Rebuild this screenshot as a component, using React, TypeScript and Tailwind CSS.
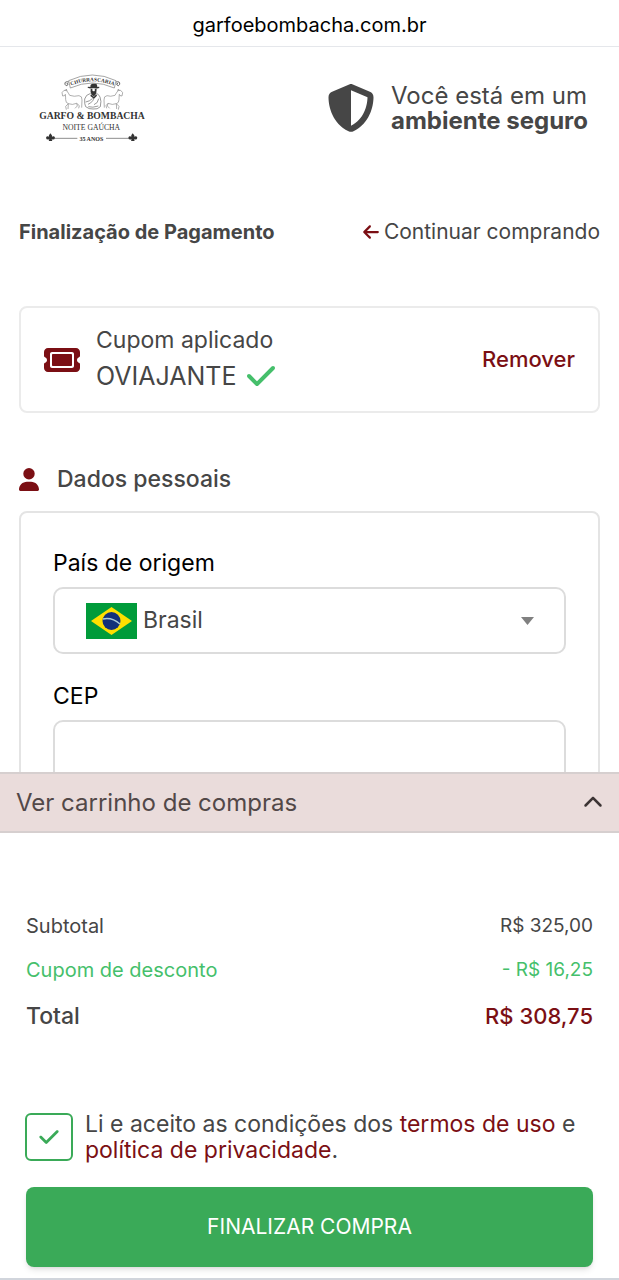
import { useState } from "react";
import {
  FaArrowLeft,
  FaCheck,
  FaChevronUp,
  FaShieldHalved,
  FaTicket,
  FaUser,
} from "react-icons/fa6";

const Logo = () => {
  return (
    <svg
      viewBox="54 36 324 213"
      className="w-[108px] h-[71px] shrink-0"
      role="img"
      aria-label="Churrascaria Garfo & Bombacha"
      fill="#333"
      fontFamily="'Liberation Serif', serif"
    >
      {/* arched banner */}
      <path id="arch" d="M148 79 Q217 49 287 79" fill="none" />
      <path
        d="M146 62 Q217 28 288 62 L283 84 Q217 54 151 84 Z"
        fill="none"
        stroke="#777"
        strokeWidth="2"
      />
      <text fontSize="16" fontWeight="bold" textAnchor="middle">
        <textPath href="#arch" startOffset="50%">
          CHURRASCARIA
        </textPath>
      </text>
      <g fill="none" stroke="#666" strokeWidth="3">
        <path d="M146 66 q-13 -3 -11 7 q3 8 9 1 q1 -5 -4 -3" />
        <path d="M288 66 q13 -3 11 7 q-3 8 -9 1 q-1 -5 4 -3" />
      </g>
      {/* horses */}
      <g fill="none" stroke="#888" strokeWidth="2">
        <path d="M128 108 l-2 -10 l6 -7 l8 1 q6 8 9 14 q14 5 28 1 q10 1 9 13 l-1 23 M128 108 q8 0 8 -5 q1 9 1 16 q0 10 8 12 l-8 8 l2 10 M145 131 l-1 16 M145 131 q12 5 25 -1 l8 7 l-2 8 M170 130 l2 8 l-7 7 M136 91 l3 -4 l2 6" />
        <path d="M306 108 l2 -10 l-6 -7 l-8 1 q-6 8 -9 14 q-14 5 -24 1 q-10 1 -9 13 l1 23 M306 108 q-8 0 -8 -5 q-1 9 -1 16 q0 10 -8 12 l8 8 l-2 10 M289 131 l1 16 M289 131 q-12 5 -25 -1 l-6 7 l2 8 M264 130 l-2 8 l7 7 M298 91 l-3 -4 l-2 6" />
      </g>
      {/* gaucho */}
      <path d="M202 81 q2 5 11 4 l13 0 q10 2 13 -4 q-3 -1 -7 0 q0 -11 -7 -10 l-9 0 q-6 2 -5 10 q-5 -2 -9 0 Z" />
      <path d="M212 86 q-2 12 3 18 q6 8 11 1 q4 -6 4 -19 l-6 0 q2 8 -3 8 q-5 0 -4 -8 Z" />
      <path
        d="M212 100 q-15 4 -18 17 q-1 16 3 23 q10 8 22 7 q14 2 22 -7 q4 -17 -1 -29 q-4 -9 -11 -11 M197 126 q12 -2 20 -10 M220 108 l0 12 q-8 11 -16 13 M236 116 q-2 14 -14 18 M205 140 q12 4 30 -2"
        fill="none"
        stroke="#666"
        strokeWidth="2"
      />
      <path d="M213 103 l8 8 l8 -8 l2 4 l-9 9 l-11 -8 Z" />
      <text
        x="216"
        y="177"
        fontSize="29"
        fontWeight="bold"
        textAnchor="middle"
      >
        GARFO &amp; BOMBACHA
      </text>
      <text x="214" y="210" fontSize="23" textAnchor="middle">
        NOITE GAÚCHA
      </text>
      <text
        x="214"
        y="243"
        fontSize="18"
        fontWeight="bold"
        textAnchor="middle"
      >
        35 ANOS
      </text>
      {/* ornaments */}
      <path d="M103 235 H172 M258 235 H327" stroke="#555" strokeWidth="2" />
      <path d="M91 220 q9 9 3 12 q8 -7 11 1 q-1 8 -10 5 l2 5 h-11 l2 -5 q-9 3 -10 -5 q3 -8 11 -1 q-6 -3 2 -12 Z" />
      <path d="M338 220 q9 9 3 12 q8 -7 11 1 q-1 8 -10 5 l2 5 h-11 l2 -5 q-9 3 -10 -5 q3 -8 11 -1 q-6 -3 2 -12 Z" />
    </svg>
  );
};

const BrazilFlag = () => {
  return (
    <svg viewBox="0 0 51 36" className="w-[51px] h-9" aria-hidden="true">
      <rect width="51" height="36" fill="#009b3a" />
      <path d="M25.500 4 L46 18 L25.500 32 L5 18 Z" fill="#fedf00" />
      <circle cx="25.500" cy="18" r="9" fill="#12307a" />
      <path
        d="M17 16 Q26 14 34 21"
        fill="none"
        stroke="#a9c9d8"
        strokeWidth="1.500"
      />
    </svg>
  );
};

const App = () => {
  const [accepted, setAccepted] = useState(true);

  return (
    <div className="h-screen flex flex-col bg-white text-[#464646] font-['Inter',sans-serif]">
      {/* address */}
      <div className="h-[47px] shrink-0 flex items-center justify-center pt-1 border-b border-gray-200 text-black text-[20px]">
        garfoebombacha.com.br
      </div>

      {/* page */}
      <main className="flex-1 min-h-0 overflow-hidden px-[19px]">
        <header className="flex items-center justify-between pt-[25px] pl-[19px] pr-3">
          <Logo />
          <div className="flex items-center gap-4">
            <FaShieldHalved className="size-12" />
            <p className="text-[24px] leading-[25px]">
              Você está em um
              <br />
              <strong>ambiente seguro</strong>
            </p>
          </div>
        </header>

        <div className="flex items-center justify-between mt-[75px] leading-7">
          <h1 className="text-[20px] font-bold">Finalização de Pagamento</h1>
          <a href="#" className="flex items-center gap-1 text-[21px]">
            <FaArrowLeft className="size-[18px] text-[#7b0f14]" />
            Continuar comprando
          </a>
        </div>

        {/* coupon */}
        <section className="mt-[60px] flex items-center h-[107px] px-[23px] border-2 border-[#ebebeb] rounded-lg">
          <FaTicket className="size-9 text-[#7b0f14]" />
          <div className="ml-4 flex-1">
            <p className="text-[23px] leading-8">Cupom aplicado</p>
            <p className="flex items-center gap-2 text-[25px] leading-10">
              OVIAJANTE
              <FaCheck className="size-8 text-[#45bf6b]" />
            </p>
          </div>
          <button className="text-[22px] font-medium text-[#7b0f14]">
            Remover
          </button>
        </section>

        {/* personal data */}
        <h2 className="mt-[50px] flex items-center gap-[18px] text-[23px] leading-8 font-medium">
          <FaUser className="w-5 h-[23px] text-[#7b0f14]" />
          Dados pessoais
        </h2>
        <section className="mt-4 px-8 pt-8 pb-8 border-2 border-[#e4e4e4] rounded-lg text-[23px]">
          <label htmlFor="country" className="block leading-9 text-black">
            País de origem
          </label>
          <div className="relative mt-1.5">
            <select
              id="country"
              className="block w-full h-[67px] pl-[88px] pr-12 border-2 border-[#dcdcdc] rounded-[10px] appearance-none bg-white"
            >
              <option>Brasil</option>
            </select>
            <div className="absolute left-[33px] inset-y-0 flex items-center pointer-events-none">
              <BrazilFlag />
            </div>
            <svg
              viewBox="0 0 13 8"
              className="absolute right-8 inset-y-0 my-auto w-[13px] h-2 pointer-events-none"
              fill="#808080"
              aria-hidden="true"
            >
              <path d="M0 0 H13 L6.500 8 Z" />
            </svg>
          </div>
          <label htmlFor="cep" className="block mt-6 leading-9 text-black">
            CEP
          </label>
          <input
            id="cep"
            className="block w-full h-[67px] mt-1.5 px-8 border-2 border-[#dcdcdc] rounded-[10px]"
          />
        </section>
      </main>

      {/* cart */}
      <footer className="shrink-0 border-b-2 border-gray-300 pb-[11px]">
        <button className="w-full h-[61px] flex items-center justify-between px-4 border-y-2 border-[#d6cfcf] bg-[#eadcdb] text-[24px] text-[#524848]">
          Ver carrinho de compras
          <FaChevronUp className="size-5 text-[#3c3434]" />
        </button>

        <dl className="px-[26px] pt-[71px]">
          <div className="flex justify-between leading-[44px]">
            <dt className="text-[20px]">Subtotal</dt>
            <dd className="text-[19px]">R$ 325,00</dd>
          </div>
          <div className="flex justify-between leading-[44px] text-[#45bf6b]">
            <dt className="text-[20px]">Cupom de desconto</dt>
            <dd className="text-[19px]">- R$ 16,25</dd>
          </div>
          <div className="flex justify-between leading-[48px] font-medium">
            <dt className="text-[23px]">Total</dt>
            <dd className="text-[22px] text-[#7b0f14]">R$ 308,75</dd>
          </div>
        </dl>

        <div className="flex items-center gap-3 mt-[71px] px-[25px]">
          <div className="relative size-12 shrink-0">
            <input
              id="terms"
              type="checkbox"
              checked={accepted}
              onChange={() => setAccepted(!accepted)}
              className="block size-12 appearance-none border-2 border-[#3aaa58] rounded-md"
            />
            {accepted && (
              <FaCheck className="absolute inset-0 m-auto size-[22px] text-[#3aaa58] pointer-events-none" />
            )}
          </div>
          <label htmlFor="terms" className="text-[23px] leading-[26px]">
            Li e aceito as condições dos{" "}
            <a href="#" className="text-[#7b0f14]">
              termos de uso
            </a>{" "}
            e{" "}
            <a href="#" className="text-[#7b0f14]">
              política de privacidade
            </a>
            .
          </label>
        </div>

        <div className="px-[26px] mt-6">
          <button className="w-full h-20 rounded-lg bg-[#3aaa58] text-[21px] text-white shadow-md">
            FINALIZAR COMPRA
          </button>
        </div>
      </footer>
    </div>
  );
};

export default App;
